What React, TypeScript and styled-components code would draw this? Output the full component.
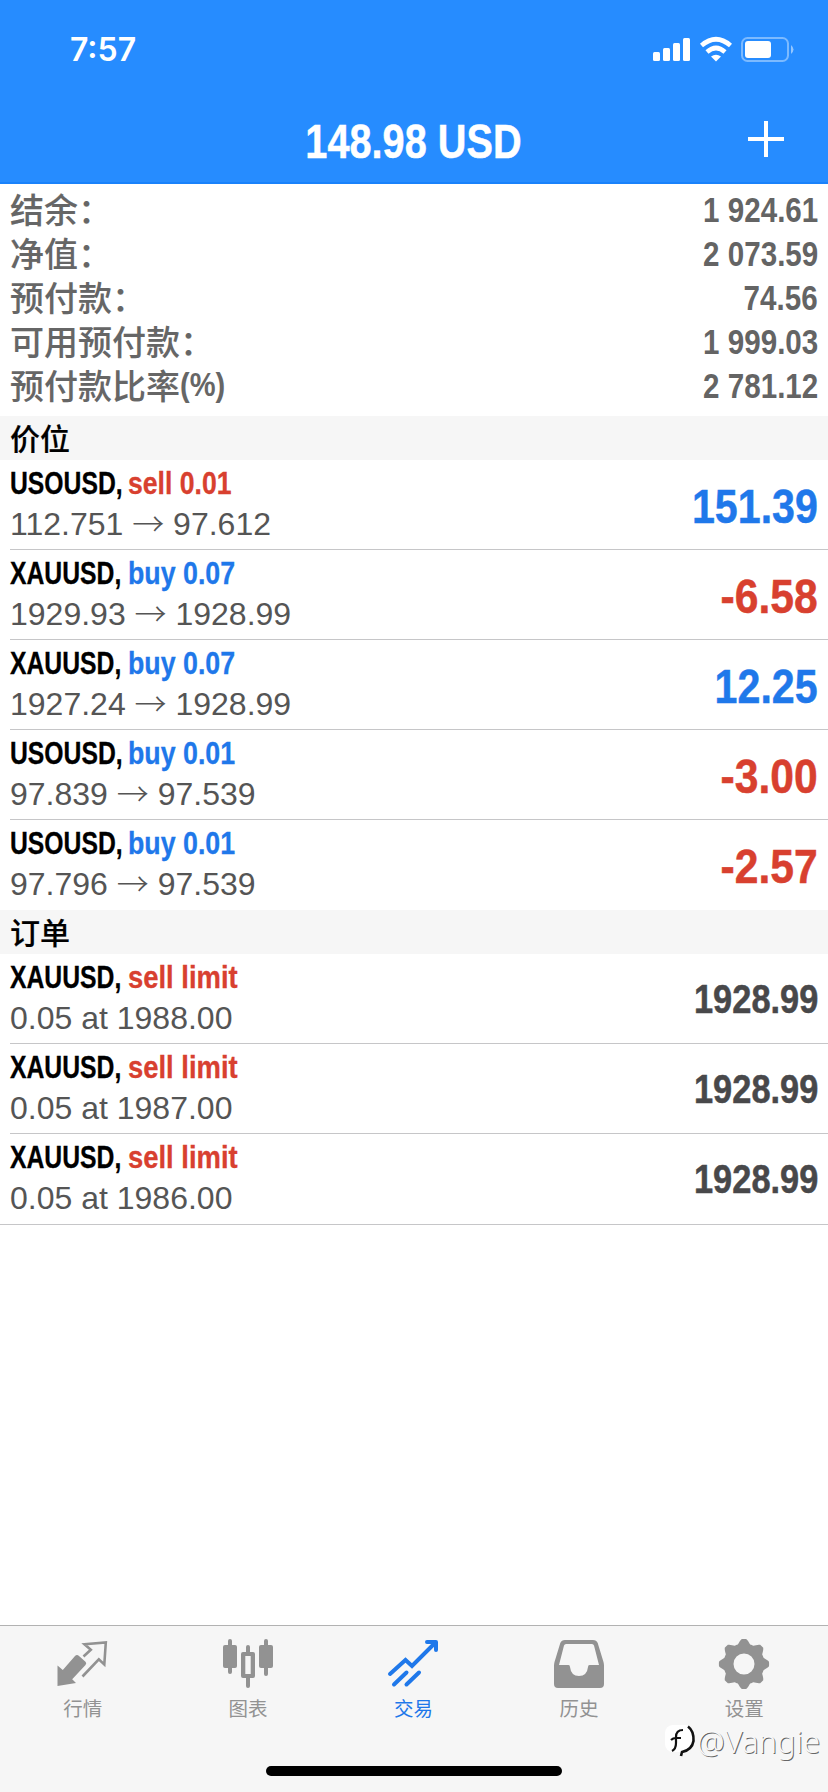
import React from "react";
import styled, { createGlobalStyle } from "styled-components";

const BLUE = "#1f78ea";
const RED = "#d8402f";
const latin = `"Liberation Sans", "Noto Sans CJK SC", sans-serif`;
const han = `"Noto Sans CJK SC", sans-serif`;

const Global = createGlobalStyle`
  * { box-sizing: border-box; }
  body { margin: 0; background: #fff; font-family: ${latin}; }
`;
const Screen = styled.div`
  width: 828px; height: 1792px; display: flex; flex-direction: column;
  background: #fff; overflow: hidden; white-space: nowrap;
`;
const Condensed = styled.span<{ $k: number; $from?: string }>`
  display: inline-block; transform: scaleX(${(p) => p.$k}); transform-origin: ${(p) => p.$from ?? "left"} center;
`;
const Header = styled.header`
  height: 184px; background: #268cff; border-bottom: 2px solid #1a82fb; color: #fff;
`;
const StatusBar = styled.div`
  height: 96px; padding: 3px 34px 0 70px; display: flex; justify-content: space-between; align-items: center;
`;
const Clock = styled.span`font: 600 32px/40px Inter, ${latin};`;
const StatusIcons = styled.svg`width: 144px; height: 28px; display: block;`;
const NavBar = styled.div`
  height: 86px; display: grid; grid-template-columns: 100px 1fr 100px; align-items: center;
`;
const NavTitle = styled.h1`
  grid-column: 2; margin: 4px 2px 0 0; text-align: center; font: 700 49px/56px ${latin};
  -webkit-text-stroke: 0.5px currentColor;
`;
const AddButton = styled.button`
  border: 0; padding: 0; background: none; width: 36px; height: 36px; margin: 0 0 0 20px; color: #fff;
  svg { display: block; }
`;
const Summary = styled.dl`margin: 0; height: 232px; padding: 4px 10px 0 10px;`;
const SummaryRow = styled.div`
  height: 44px; display: flex; justify-content: space-between; align-items: center; color: #666;
`;
const Label = styled.dt`
  display: flex; margin-top: -2px; font: 500 34px/38px ${han}; -webkit-text-stroke: 0.1px currentColor;
`;
const Percent = styled(Condensed)`font: 700 33px/38px ${latin}; -webkit-text-stroke: 0;`;
const Value = styled.dd`margin: 0; font: 700 35px/44px ${latin}; color: #646464;`;
const SectionHead = styled.h2`
  margin: 0; height: 44px; padding-left: 10px; background: #f6f6f6; color: #000;
  font: 500 30px/42px ${han}; -webkit-text-stroke: 0.2px currentColor;
`;
const List = styled.ul<{ $closed?: boolean }>`
  list-style: none; margin: 0; padding: 0;
  border-bottom: ${(p) => (p.$closed ? "1px solid #c6c6c8" : "0")};
`;
const Item = styled.li`
  height: 90px; margin-left: 10px; padding-right: 10px; display: flex; justify-content: space-between;
  align-items: center; border-bottom: 1px solid #c6c6c8;
  &:last-child { border-bottom-color: transparent; }
`;
const Heading = styled.div`
  display: grid; grid-template-columns: 118px auto; margin-top: -2px; color: #000;
  font: 700 31.5px/41px ${latin}; -webkit-text-stroke: 0.3px currentColor;
`;
const Side = styled(Condensed)<{ $c: string }>`color: ${(p) => p.$c};`;
const Detail = styled.div`height: 41px; font: 400 32px/41px ${latin}; color: #555;`;
const Arrow = styled.span`font: 300 32px/30px ${han}; position: relative; top: 1px;`;
const Amount = styled.div<{ $c: string; $size: number; $drop?: number }>`
  color: ${(p) => p.$c}; font: 700 ${(p) => p.$size}px/56px ${latin}; padding-top: ${(p) => p.$drop ?? 0}px;
  -webkit-text-stroke: 0.5px currentColor;
`;
const Spacer = styled.div`flex: 1;`;
const TabBar = styled.nav`
  height: 167px; background: #f6f6f6; border-top: 1px solid #b2b2b2; position: relative; padding-right: 1px;
  display: grid; grid-template-columns: repeat(5, 1fr); align-items: start;
`;
const Tab = styled.a<{ $on?: boolean }>`
  color: ${(p) => (p.$on ? BLUE : "#929292")}; display: flex; flex-direction: column; align-items: center;
  padding-top: 12px;
  svg { display: block; width: 52px; height: 52px; }
`;
const TabLabel = styled.span`font: 400 19.5px/28px ${han}; margin-top: 4px;`;
const HomeIndicator = styled.div`
  position: absolute; left: 266px; bottom: 16px; width: 296px; height: 10px; border-radius: 5px; background: #000;
`;
const Watermark = styled.div`
  position: absolute; right: 8px; bottom: 31px; display: flex; align-items: center; gap: 1px; color: #f8f8f8;
  font: 300 31px/40px "Noto Sans", sans-serif; text-shadow: 1px 1px 0.5px #666;
`;

const summary = [
  ["结余：", "1 924.61"], ["净值：", "2 073.59"], ["预付款：", "74.56"],
  ["可用预付款：", "1 999.03"], ["预付款比率", "2 781.12"],
];
const positions = [
  ["USOUSD", "sell 0.01", "112.751", "97.612", "151.39"],
  ["XAUUSD", "buy 0.07", "1929.93", "1928.99", "-6.58"],
  ["XAUUSD", "buy 0.07", "1927.24", "1928.99", "12.25"],
  ["USOUSD", "buy 0.01", "97.839", "97.539", "-3.00"],
  ["USOUSD", "buy 0.01", "97.796", "97.539", "-2.57"],
];
const orders = ["1988.00", "1987.00", "1986.00"];

const gearPath = (() => {
  const pts: string[] = [];
  const steps = 144;
  for (let i = 0; i < steps; i++) {
    const a = (i / steps) * Math.PI * 2;
    const w = Math.max(-1, Math.min(1, Math.cos(8 * a) * 1.3));
    const r = 22.8 + 2.3 * w;
    pts.push(`${(26 + r * Math.cos(a)).toFixed(2)} ${(26 + r * Math.sin(a)).toFixed(2)}`);
  }
  return `M${pts.join("L")}Z M36.5 26a10.5 10.5 0 1 0-21 0a10.5 10.5 0 1 0 21 0Z`;
})();

const tabs = [
  { label: "行情", icon: (
    <svg viewBox="0 0 52 52">
      <path fill="currentColor" d="M0.500 27.500L5.800 32L18 18Q20 16 22 18L28.500 23.800Q30 25.300 28.500 27L15.200 41.300L19 45L0.500 47.900Z" />
      <path fill="none" stroke="currentColor" strokeWidth="2.600" d="M26.500 18.500L33.800 11.700L27.500 6.200L48.800 4.500L47.300 26.500L41.800 21.300L25.500 38.500" />
    </svg>) },
  { label: "图表", icon: (
    <svg viewBox="0 0 52 52" fill="currentColor">
      <rect x="1" y="7" width="14" height="23" rx="2" /><rect x="6" y="1" width="4" height="35" rx="2" />
      <rect x="37" y="7" width="14" height="23" rx="2" /><rect x="42" y="1" width="4" height="37" rx="2" />
      <path fillRule="evenodd" d="M21 14h10q2 0 2 2v22q0 2-2 2H21q-2 0-2-2V16q0-2 2-2ZM23.300 18v18h5.400V18Z" />
      <rect x="24" y="7" width="4" height="10" rx="2" /><rect x="24" y="38" width="4" height="12" rx="2" />
    </svg>) },
  { label: "交易", on: true, icon: (
    <svg viewBox="0 0 52 52" fill="none" stroke="currentColor" strokeWidth="4" strokeLinecap="round">
      <path d="M3 36L18.500 22L25 28L48 5" /><path d="M40 4H49V12" strokeLinejoin="round" />
      <path d="M7 46.500L19.500 34.500M19.500 46.500L32 34.500" />
    </svg>) },
  { label: "历史", icon: (
    <svg viewBox="0 0 52 52">
      <path fill="currentColor" fillRule="evenodd" d="M12 2H40Q43.500 2 44.700 5L50.500 24Q51 26 51 28V46Q51 50 47 50H5Q1 50 1 46V28Q1 26 1.500 24L7.300 5Q8.500 2 12 2ZM13 6Q11.500 6 11 7.500L6 27H15.500Q17 27 17 29Q18 38 26 38Q34 38 35 29Q35 27 36.500 27H46L41 7.500Q40.500 6 39 6Z" />
    </svg>) },
  { label: "设置", icon: (
    <svg viewBox="0 0 52 52"><path fill="currentColor" fillRule="evenodd" d={gearPath} /></svg>) },
];

export default function App() {
  return (
    <Screen>
      <Global />
      <Header>
        <StatusBar>
          <Clock>7:57</Clock>
          <StatusIcons viewBox="0 0 144 28" fill="#fff">
            <rect x="3" y="16" width="7" height="9" rx="1.500" /><rect x="13" y="12" width="7" height="13" rx="1.500" />
            <rect x="23" y="7" width="7" height="18" rx="1.500" /><rect x="33" y="2" width="7" height="23" rx="1.500" />
            <path fill="none" stroke="#fff" strokeWidth="4.600" d="M51.500 9.500Q66 -3 80.500 9.500M57 16Q66 8 75 16" />
            <path d="M61 20.500Q66 17 71 20.500L66 25.500Z" />
            <rect x="92" y="2" width="46" height="23" rx="5.500" fill="none" stroke="#fff" strokeOpacity=".4" strokeWidth="2" />
            <rect x="95" y="5" width="26" height="17" rx="3" />
            <path d="M141 9Q146 13.500 141 18Z" fillOpacity=".5" />
          </StatusIcons>
        </StatusBar>
        <NavBar>
          <NavTitle><Condensed $k={0.81} $from="center">148.98 USD</Condensed></NavTitle>
          <AddButton aria-label="add">
            <svg width="36" height="36"><path d="M0 18H36M18 0V36" stroke="currentColor" strokeWidth="4" /></svg>
          </AddButton>
        </NavBar>
      </Header>
      <Summary>
        {summary.map(([k, v], i) => (
          <SummaryRow key={k}>
            <Label>{k}{i === 4 && <Percent $k={0.88}>(%)</Percent>}</Label>
            <Value><Condensed $k={0.845} $from="right">{v}</Condensed></Value>
          </SummaryRow>
        ))}
      </Summary>
      <SectionHead>价位</SectionHead>
      <List>
        {positions.map(([s, side, from, to, pl]) => (
          <Item key={s + from}>
            <div>
              <Heading>
                <Condensed $k={0.785}>{s},</Condensed>
                <Side $k={side.startsWith("sell") ? 0.845 : 0.85} $c={side.startsWith("sell") ? RED : BLUE}>{side}</Side>
              </Heading>
              <Detail>{from} <Arrow>→</Arrow> {to}</Detail>
            </div>
            <Amount $size={49} $drop={3} $c={pl.startsWith("-") ? RED : BLUE}>
              <Condensed $k={pl.startsWith("-") ? 0.87 : 0.84} $from="right">{pl}</Condensed>
            </Amount>
          </Item>
        ))}
      </List>
      <SectionHead>订单</SectionHead>
      <List $closed>
        {orders.map((price) => (
          <Item key={price}>
            <div>
              <Heading>
                <Condensed $k={0.785}>XAUUSD,</Condensed>
                <Side $k={0.87} $c={RED}>sell limit</Side>
              </Heading>
              <Detail>0.05 at {price}</Detail>
            </div>
            <Amount $size={40.5} $c="#48484a"><Condensed $k={0.85} $from="right">1928.99</Condensed></Amount>
          </Item>
        ))}
      </List>
      <Spacer />
      <TabBar>
        {tabs.map((t) => (
          <Tab key={t.label} $on={t.on}>{t.icon}<TabLabel>{t.label}</TabLabel></Tab>
        ))}
        <Watermark>
          <svg width="32" height="34" viewBox="0 0 32 34" fill="none">
            <rect x="1" y="1" width="28" height="27" rx="8" fill="#fff" />
            <path d="M19 6Q12 6 12 13V19Q12 25 8 27M7 16Q9 14 12 14H17" stroke="#111" strokeWidth="2.200" />
            <path d="M24 2.500Q30 7 29.500 17Q28 26 18 28L17 32" stroke="#111" strokeWidth="2.600" />
          </svg>
          <span>@Vangie</span>
        </Watermark>
        <HomeIndicator />
      </TabBar>
    </Screen>
  );
}
